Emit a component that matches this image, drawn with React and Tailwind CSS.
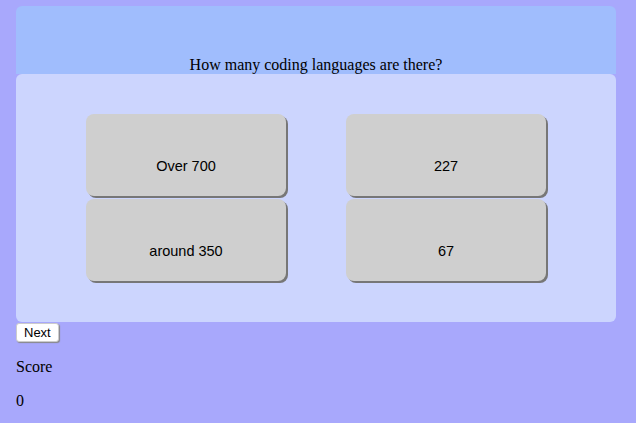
/**
 * App.jsx — Quiz card with a question, four answers, next button and score.
 */
const answers = ["Over 700", "227", "around 350", "67"];

export default function App() {
    return (
        <div className="min-h-[423px] bg-[#a8a8fc] px-4 pt-[6px] font-['Liberation_Serif',serif] text-base leading-[18px] text-black">
            <div className="w-[600px]">
                {/* Question header */}
                <div className="h-[68px] rounded-t-md bg-[#a0bdfd] flex items-end justify-center">
                    <h2 className="leading-[18px] font-normal">How many coding languages are there?</h2>
                </div>

                {/* Answers panel */}
                <div className="h-[248px] rounded-md bg-[#ccd5fe] pt-10">
                    <div className="grid grid-cols-[200px_200px] justify-center gap-x-[60px] gap-y-[3px]">
                        {answers.map((a) => (
                            <button
                                key={a}
                                className="h-[82px] w-[200px] rounded-lg bg-[#cfcfcf] shadow-[2px_2px_0_#777] pt-[22px] font-['Liberation_Sans',sans-serif] text-[14.5px] leading-[24px] text-black"
                            >
                                {a}
                            </button>
                        ))}
                    </div>
                </div>
            </div>

            {/* Next button */}
            <button className="block mt-px h-[19px] px-[7px] rounded-[3px] bg-white shadow-[1px_1px_1px_#888] border border-[#ccc] font-['Liberation_Sans',sans-serif] text-[13px] leading-none">
                Next
            </button>

            <p className="my-4">Score</p>
            <p className="my-4">0</p>
        </div>
    );
}
